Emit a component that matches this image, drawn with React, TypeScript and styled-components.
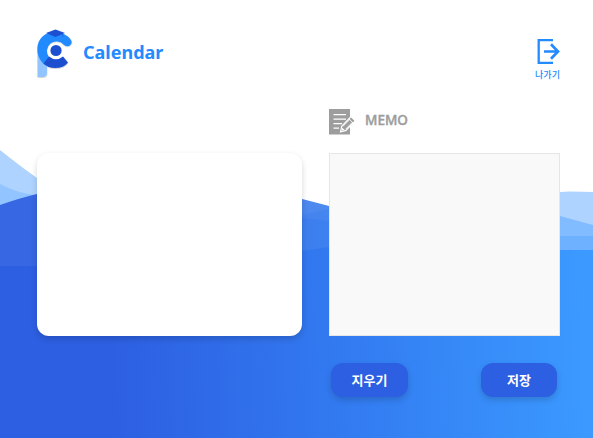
import React from "react";
import styled, { createGlobalStyle } from "styled-components";

const GlobalStyle = createGlobalStyle`
  * { box-sizing: border-box; }
  body {
    margin: 0;
    overflow: hidden;
    background: #fff;
    font-family: "Noto Sans", "Noto Sans CJK KR", sans-serif;
  }
`;

const Page = styled.main`
  position: relative;
  width: 593px;
  height: 438px;
  padding: 28px 33px 0 37px;
  overflow: hidden;
  isolation: isolate;
`;

const Backdrop = styled.svg`
  position: absolute;
  inset: 0;
  z-index: -1;
`;

const Header = styled.header`
  display: flex;
  justify-content: space-between;
  height: 81px;
`;

const Brand = styled.div`
  display: flex;
  align-items: flex-start;
  gap: 9px;
`;

const Title = styled.h1`
  margin: 11px 0 0;
  font: 700 18px/26px "Noto Sans", sans-serif;
  color: #248aff;
`;

const ExitButton = styled.button`
  display: flex;
  flex-direction: column;
  align-items: center;
  width: 25px;
  height: 44px;
  margin-top: 10px;
  padding: 0;
  border: 0;
  background: none;
  color: #248aff;
`;

const ExitLabel = styled.span`
  margin-top: 5px;
  font: 500 9px/12px "Noto Sans CJK KR", sans-serif;
  white-space: nowrap;
`;

const Columns = styled.div`
  display: grid;
  grid-template-columns: 265px 231px;
  gap: 27px;
`;

const CalendarPanel = styled.section`
  height: 183px;
  margin-top: 44px;
  border-radius: 12px;
  background: #fff;
  box-shadow: 0 3px 6px rgba(0, 0, 0, 0.16);
`;

const MemoColumn = styled.section`
  display: flex;
  flex-direction: column;
`;

const MemoHeading = styled.div`
  display: flex;
  align-items: flex-start;
  gap: 9px;
  height: 44px;
`;

const MemoTitle = styled.h2`
  margin: 1px 0 0;
  font: 500 13.5px/20px "Noto Sans", sans-serif;
  color: #9d9d9d;
  -webkit-text-stroke: 0.45px #9d9d9d;
`;

const MemoField = styled.textarea`
  display: block;
  height: 183px;
  padding: 8px;
  border: 1px solid #e6e6e6;
  border-radius: 0;
  outline: 0;
  resize: none;
  background: #f9f9f9;
`;

const Actions = styled.div`
  display: flex;
  justify-content: space-between;
  padding: 27px 3px 0 2px;
`;

const ActionButton = styled.button<{ $width: number }>`
  width: ${({ $width }) => $width}px;
  height: 34px;
  padding: 0;
  border: 0;
  border-radius: 12px;
  background: #2d5fe2;
  color: #fff;
  font: 700 13px/34px "Noto Sans CJK KR", sans-serif;
  box-shadow: 0 3px 6px rgba(0, 0, 0, 0.16);
`;

const Waves = () => (
  <Backdrop width="593" height="438" viewBox="0 0 593 438" aria-hidden="true">
    <defs>
      <linearGradient id="sea" gradientUnits="userSpaceOnUse" x1="110" y1="300" x2="580" y2="278">
        <stop offset="0" stopColor="#2d5fe2" />
        <stop offset=".48" stopColor="#327af0" />
        <stop offset="1" stopColor="#3b99ff" />
      </linearGradient>
    </defs>
    <path fill="#afd3ff" d="M0 150Q20 166 37 178Q110 225 190 220L0 240ZM500 205Q535 192 570 191.5L593 192V260H500Z" />
    <path fill="#92c5ff" d="M0 184Q19 194 37 195L60 220H0Z" />
    <path fill="#80bcff" d="M500 211Q540 212 560 216L593 225V255H500Z" />
    <path fill="#6eb1ff" d="M500 236H593V255H500Z" />
    <path fill="url(#sea)" d="M0 205Q20 198 37 194Q130 170 215 180Q260 186 302 199L329 206Q430 240 490 250H593V438H0Z" />
    <path fill="#fff" fillOpacity=".055" d="M0 205Q20 198 37 194Q130 170 215 180Q260 186 302 199L329 206V247L302 251Q220 266 150 266H0Z" />
    <path fill="#fff" fillOpacity=".045" d="M302 199L329 206V221L302 218Z" />
    <path fill="#fff" fillOpacity=".045" d="M302 199L329 206V209L302 215Z" />
  </Backdrop>
);

const Logo = () => (
  <svg width="37" height="52" viewBox="0 0 37 52" aria-hidden="true">
    <defs>
      <filter id="logoShadow" x="-20%" y="-20%" width="140%" height="140%">
        <feDropShadow dx=".3" dy=".8" stdDeviation=".7" floodOpacity=".2" />
      </filter>
    </defs>
    <g filter="url(#logoShadow)">
      <path d="M.5 22H10V45Q10 49 6 49H.5Z" fill="#92c5ff" />
      <path d="M8 37C-3 28-2 11 10 5.5C18 2 30 5 34.3 12.5C36 17 31 20 27 17A9.5 9.5 0 0 0 12 29Z" fill="#248aff" />
      <path d="M12 28.5Q19 34 26 28.5L31 34.5Q27 40 18 40Q11 40 6.5 35.5Z" fill="#1d50d0" />
    </g>
    <circle cx="19" cy="22.5" r="8" fill="#fff" />
    <circle cx="19" cy="22.5" r="5.6" fill="#1d50d0" />
    <path d="M9 5L18.5 1.5L28 5L18.5 9Z" fill="#1d50d0" />
    <path d="M25.8 6V9" stroke="#1d50d0" strokeWidth=".5" />
  </svg>
);

const ExitIcon = () => (
  <svg width="25" height="26" viewBox="0 0 25 26" fill="none" stroke="currentColor" strokeWidth="2.3" aria-hidden="true">
    <path d="M18 2.2H3.7V24.8H18" />
    <path d="M9 13.5H23M16 6.3L23 13.5L16 20.7" strokeWidth="2.7" />
  </svg>
);

const MemoIcon = () => (
  <svg width="27" height="26" viewBox="0 0 27 26" aria-hidden="true">
    <path d="M0 0H21V25.5H0Z" fill="#9d9d9d" />
    <path d="M4.5 5.7H17M4.5 10.2H17M4.5 14.7H13M4.5 19.2H10" stroke="#fff" strokeWidth="1.2" />
    <path d="M11.5 23L12.7 17.2L22 7.5L26.3 11.7L17 21.4Z" fill="#9d9d9d" stroke="#fff" strokeWidth="1.2" />
    <path d="M13.8 17.5L20.7 10.5M16.6 20.2L23.5 13.2M19.8 9.7L24.2 14" stroke="#fff" strokeWidth=".9" />
    <path d="M12.6 21.8L13.3 18.8L15.6 21.1Z" fill="#fff" />
  </svg>
);

export default function App() {
  return (
    <>
      <GlobalStyle />
      <Page>
        <Waves />
        <Header>
          <Brand>
            <Logo />
            <Title>Calendar</Title>
          </Brand>
          <ExitButton>
            <ExitIcon />
            <ExitLabel>나가기</ExitLabel>
          </ExitButton>
        </Header>
        <Columns>
          <CalendarPanel />
          <MemoColumn>
            <MemoHeading>
              <MemoIcon />
              <MemoTitle>MEMO</MemoTitle>
            </MemoHeading>
            <MemoField aria-label="MEMO" />
            <Actions>
              <ActionButton $width={77}>지우기</ActionButton>
              <ActionButton $width={76}>저장</ActionButton>
            </Actions>
          </MemoColumn>
        </Columns>
      </Page>
    </>
  );
}
